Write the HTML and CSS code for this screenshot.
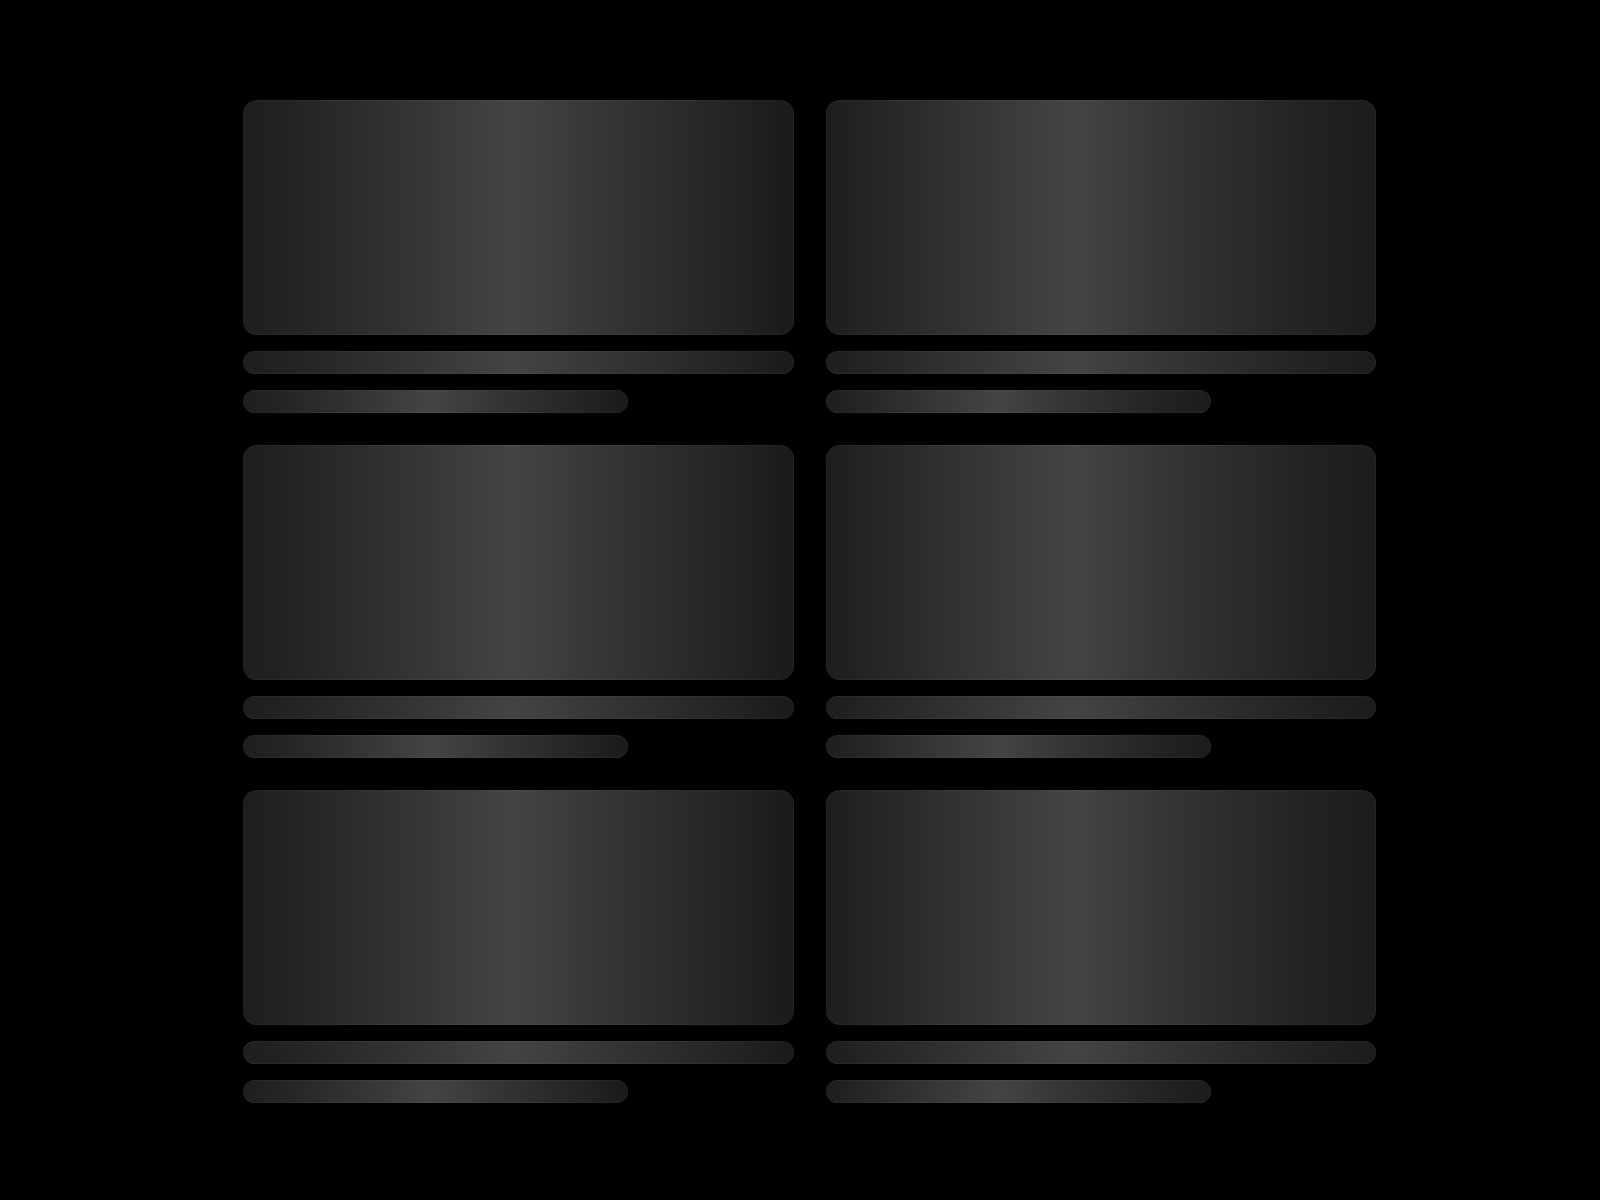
FILE: index.html
```html
<!DOCTYPE html>
<html lang="en">
<head>
<meta charset="utf-8">
<title>Loading</title>
<link rel="stylesheet" href="styles.css">
</head>
<body>
<main class="grid">
  <div class="item left"><div class="sk card"></div><div class="sk line"></div><div class="sk line short"></div></div>
  <div class="item right"><div class="sk card"></div><div class="sk line"></div><div class="sk line short"></div></div>
  <div class="item left"><div class="sk card"></div><div class="sk line"></div><div class="sk line short"></div></div>
  <div class="item right"><div class="sk card"></div><div class="sk line"></div><div class="sk line short"></div></div>
  <div class="item left"><div class="sk card"></div><div class="sk line"></div><div class="sk line short"></div></div>
  <div class="item right"><div class="sk card"></div><div class="sk line"></div><div class="sk line short"></div></div>
</main>
</body>
</html>
```
FILE: styles.css
```css
html, body {
  margin: 0;
  padding: 0;
  background: #000;
  font-family: "Liberation Sans", Arial, sans-serif;
}
.grid {
  width: 1133px;
  margin: 99.5px 0 0 243px;
  display: grid;
  grid-template-columns: 1fr 1fr;
  column-gap: 32px;
  row-gap: 31.6px;
}
.item {
  display: flex;
  flex-direction: column;
  gap: 16px;
}
.sk {
  box-sizing: border-box;
  border: 1px solid rgba(255, 255, 255, 0.04);
  background: linear-gradient(90deg, #1e1e1e 0%, #232323 8%, #333 29%, #444 49%, #343434 67%, #242424 88%, #1a1a1a 100%);
}
.right .sk {
  background: linear-gradient(90deg, #1e1e1e 0%, #222 5%, #353535 27%, #444 45%, #353535 62%, #222 88%, #1c1c1c 100%);
}
.card {
  height: 235px;
  border-radius: 14px;
}
.line {
  height: 23.3px;
  border-radius: 12px;
}
.short {
  width: 70%;
}
```
